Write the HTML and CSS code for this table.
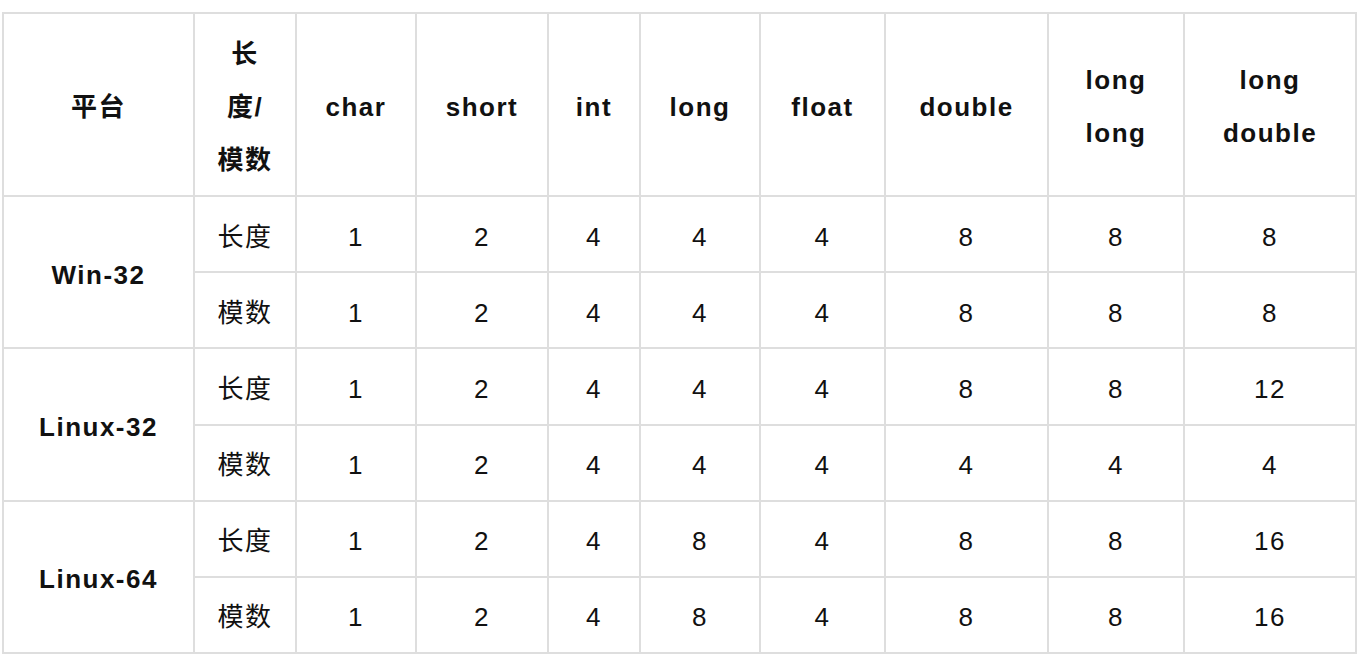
FILE: index.html
```html
<!DOCTYPE html>
<html lang="zh-CN">
<head>
<meta charset="utf-8">
<title>数据类型长度与模数</title>
<link rel="stylesheet" href="styles.css">
</head>
<body>
<table class="size-table">
  <colgroup>
    <col class="c-platform">
    <col class="c-kind">
    <col class="c-char">
    <col class="c-short">
    <col class="c-int">
    <col class="c-long">
    <col class="c-float">
    <col class="c-double">
    <col class="c-ll">
    <col class="c-ld">
  </colgroup>
  <thead>
    <tr>
      <th>平台</th>
      <th>长度/模数</th>
      <th>char</th>
      <th>short</th>
      <th>int</th>
      <th>long</th>
      <th>float</th>
      <th>double</th>
      <th>long long</th>
      <th>long double</th>
    </tr>
  </thead>
  <tbody>
    <tr>
      <th rowspan="2">Win-32</th>
      <td>长度</td><td>1</td><td>2</td><td>4</td><td>4</td><td>4</td><td>8</td><td>8</td><td>8</td>
    </tr>
    <tr>
      <td>模数</td><td>1</td><td>2</td><td>4</td><td>4</td><td>4</td><td>8</td><td>8</td><td>8</td>
    </tr>
    <tr>
      <th rowspan="2">Linux-32</th>
      <td>长度</td><td>1</td><td>2</td><td>4</td><td>4</td><td>4</td><td>8</td><td>8</td><td>12</td>
    </tr>
    <tr>
      <td>模数</td><td>1</td><td>2</td><td>4</td><td>4</td><td>4</td><td>4</td><td>4</td><td>4</td>
    </tr>
    <tr>
      <th rowspan="2">Linux-64</th>
      <td>长度</td><td>1</td><td>2</td><td>4</td><td>8</td><td>4</td><td>8</td><td>8</td><td>16</td>
    </tr>
    <tr>
      <td>模数</td><td>1</td><td>2</td><td>4</td><td>8</td><td>4</td><td>8</td><td>8</td><td>16</td>
    </tr>
  </tbody>
</table>
</body>
</html>
```

FILE: styles.css
```css
html, body {
  margin: 0;
  padding: 0;
  background: #ffffff;
}

body {
  padding: 12px 0 0 2px;
  font-family: "Liberation Sans", "Noto Sans CJK SC", sans-serif;
  color: #111111;
}

.size-table {
  border-collapse: collapse;
  table-layout: fixed;
  width: 1354px;
  font-size: 26px;
  letter-spacing: 1.5px;
}

.c-platform { width: 191px; }
.c-kind { width: 102px; }
.c-char { width: 120px; }
.c-short { width: 132px; }
.c-int { width: 92px; }
.c-long { width: 120px; }
.c-float { width: 125px; }
.c-double { width: 163px; }
.c-ll { width: 136px; }
.c-ld { width: 172px; }

.size-table th,
.size-table td {
  border: 2px solid #dedede;
  padding: 13.5px 20px 7.7px;
  line-height: 53px;
  text-align: center;
  vertical-align: middle;
}

.size-table thead th {
  padding-top: 13.5px;
  padding-bottom: 8.5px;
}

.size-table th {
  font-weight: bold;
}

.size-table td {
  font-weight: normal;
}
```
